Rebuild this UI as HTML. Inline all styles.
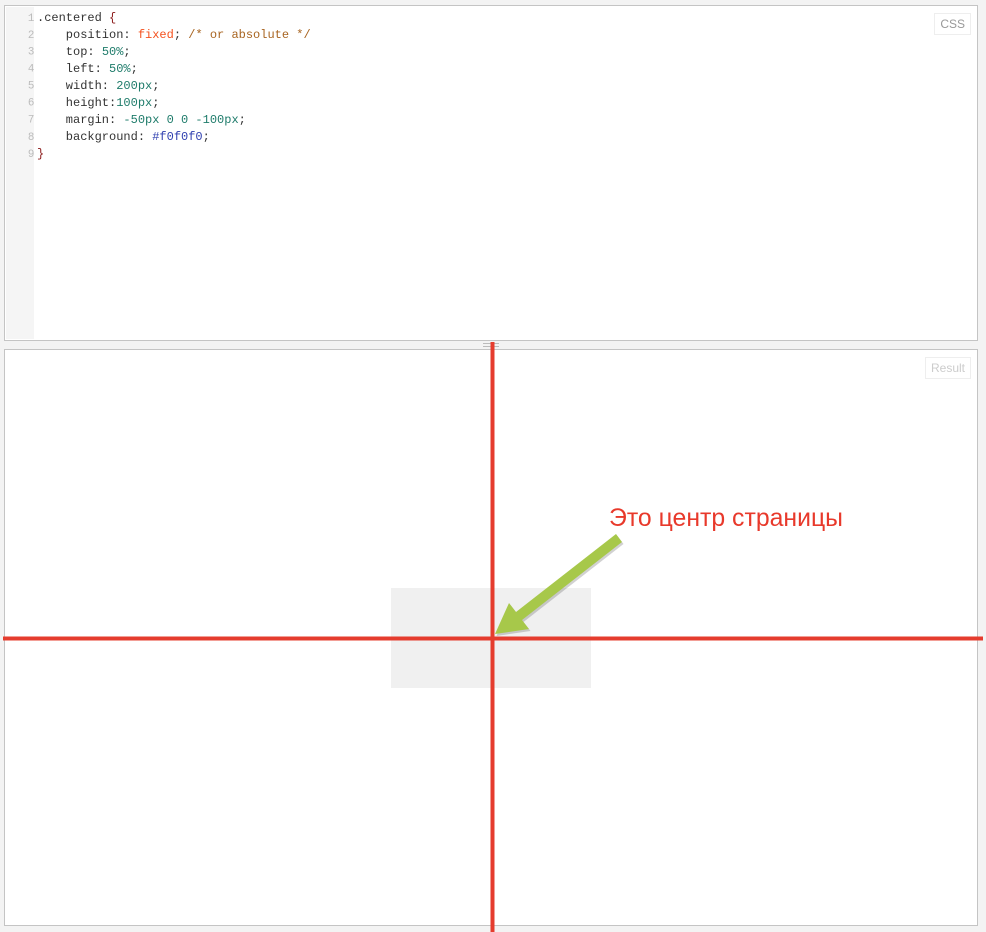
<!DOCTYPE html>
<html><head><meta charset="utf-8"><style>
html,body{margin:0;padding:0}
body{width:986px;height:932px;background:#f3f3f3;position:relative;overflow:hidden;font-family:"Liberation Sans",sans-serif}
.p{position:absolute;background:#fff;border:1px solid #c4c4c4;box-sizing:border-box}
.gut{position:absolute;left:1px;top:1px;bottom:1px;width:28px;background:#f5f5f5}
.code{position:absolute;left:-1px;top:4px;font-family:"Liberation Mono",monospace;font-size:12px;line-height:17px;white-space:pre;color:#333}
.code div{height:17px}
.ln{display:inline-block;width:30px;text-align:right;padding-right:3px;color:#bbb;font-size:12px;transform:scale(0.9);transform-origin:right center}
.o{color:#f4511e}.c{color:#a86420}.n{color:#1f7c6b}.h{color:#3040b0}.b{color:#8b1a1a}
.lab{position:absolute;border:1px solid #eee;background:#fff;font-size:12px;padding:3px 5px}
</style></head><body>
<div class="p" style="left:4px;top:5px;width:974px;height:336px">
<div class="gut"></div>
<div class="code"><div><span class="ln">1</span>.centered <span class="b">{</span></div><div><span class="ln">2</span>    position: <span class="o">fixed</span>; <span class="c">/* or absolute */</span></div><div><span class="ln">3</span>    top: <span class="n">50%</span>;</div><div><span class="ln">4</span>    left: <span class="n">50%</span>;</div><div><span class="ln">5</span>    width: <span class="n">200px</span>;</div><div><span class="ln">6</span>    height:<span class="n">100px</span>;</div><div><span class="ln">7</span>    margin: <span class="n">-50px 0 0 -100px</span>;</div><div><span class="ln">8</span>    background: <span class="h">#f0f0f0</span>;</div><div><span class="ln">9</span><span class="b">}</span></div></div>
<div class="lab" style="right:6px;top:7px;color:#999">CSS</div>
</div>
<div style="position:absolute;left:483px;top:343px;width:16px;height:1px;background:#bbb"></div>
<div style="position:absolute;left:483px;top:346px;width:16px;height:1px;background:#bbb"></div>
<div class="p" style="left:4px;top:349px;width:974px;height:577px">
<div class="lab" style="right:6px;top:7px;color:#ccc">Result</div>
</div>
<div style="position:absolute;left:391px;top:588px;width:200px;height:100px;background:#f0f0f0"></div>
<svg width="986" height="932" style="position:absolute;left:0;top:0">
<line x1="492.5" y1="342" x2="492.5" y2="932" stroke="#e53c2e" stroke-width="4"/>
<line x1="3" y1="638.5" x2="983" y2="638.5" stroke="#e53c2e" stroke-width="4"/>
<g transform="translate(1.5,2)" opacity="0.3"><path d="M616 534 L622 542 L522 620 L529 629 L495 634 L509 603 L516 612 Z" fill="#666"/></g>
<path d="M616 534 L622 542 L522 620 L529 629 L495 634 L509 603 L516 612 Z" fill="#a7c84a"/>
<text x="609" y="526" font-family="Liberation Sans, sans-serif" font-size="25" fill="#e8392b" textLength="234" lengthAdjust="spacingAndGlyphs">Это центр страницы</text>
</svg>
</body></html>
